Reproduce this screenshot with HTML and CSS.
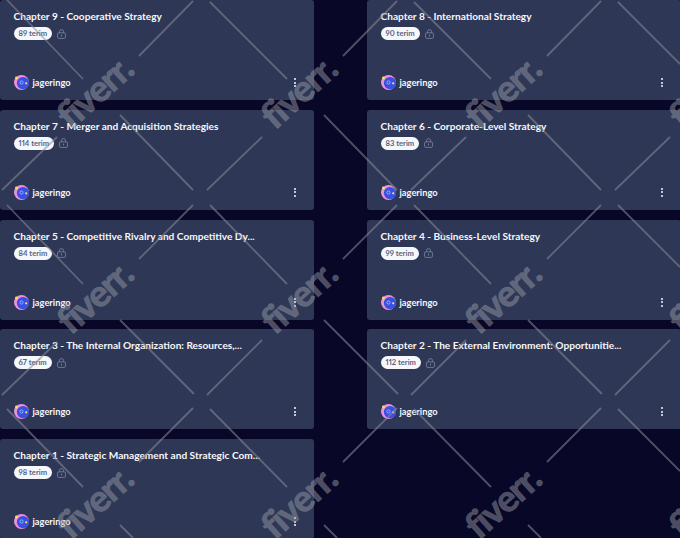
FILE: index.html
```html
<!DOCTYPE html>
<html lang="en">
<head>
  <meta charset="UTF-8" />
  <title>Chapters</title>
  <link rel="stylesheet" href="styles.css">
</head>
<body>
  <svg width="0" height="0" class="defs">
    <symbol id="lock" viewBox="0 0 10 11">
      <rect x="0.6" y="4.2" width="8.8" height="6.2" rx="1.4" fill="none" stroke="currentColor" stroke-width="0.9"/>
      <path d="M2.7 4.2V2.9a2.3 2.3 0 0 1 4.6 0v1.3" fill="none" stroke="currentColor" stroke-width="0.9"/>
      <rect x="4.5" y="6.2" width="1" height="2" fill="currentColor"/>
    </symbol>
    <symbol id="avatar" viewBox="0 0 16 16">
      <circle cx="8" cy="8" r="8" fill="#f08fe0"/>
      <circle cx="9.6" cy="8.6" r="6.6" fill="#3b4fe0"/>
      <circle cx="2.6" cy="3.2" r="1.5" fill="#f4e64a"/>
      <circle cx="8" cy="8" r="1.7" fill="none" stroke="#9fd0ff" stroke-width="0.8"/>
      <circle cx="13" cy="8.8" r="1.2" fill="#f4e64a"/>
    </symbol>
  </svg>

  <main class="grid">
    <article class="card">
      <h2>Chapter 9 - Cooperative Strategy</h2>
      <div class="meta"><span class="pill">89 terim</span><svg class="lock"><use href="#lock"/></svg></div>
      <div class="foot">
        <svg class="avatar"><use href="#avatar"/></svg><span class="user">jageringo</span>
        <span class="more"><i></i><i></i><i></i></span>
      </div>
    </article>
    <article class="card">
      <h2>Chapter 8 - International Strategy</h2>
      <div class="meta"><span class="pill">90 terim</span><svg class="lock"><use href="#lock"/></svg></div>
      <div class="foot">
        <svg class="avatar"><use href="#avatar"/></svg><span class="user">jageringo</span>
        <span class="more"><i></i><i></i><i></i></span>
      </div>
    </article>
    <article class="card">
      <h2>Chapter 7 - Merger and Acquisition Strategies</h2>
      <div class="meta"><span class="pill">114 terim</span><svg class="lock"><use href="#lock"/></svg></div>
      <div class="foot">
        <svg class="avatar"><use href="#avatar"/></svg><span class="user">jageringo</span>
        <span class="more"><i></i><i></i><i></i></span>
      </div>
    </article>
    <article class="card">
      <h2>Chapter 6 - Corporate-Level Strategy</h2>
      <div class="meta"><span class="pill">83 terim</span><svg class="lock"><use href="#lock"/></svg></div>
      <div class="foot">
        <svg class="avatar"><use href="#avatar"/></svg><span class="user">jageringo</span>
        <span class="more"><i></i><i></i><i></i></span>
      </div>
    </article>
    <article class="card">
      <h2>Chapter 5 - Competitive Rivalry and Competitive Dy...</h2>
      <div class="meta"><span class="pill">84 terim</span><svg class="lock"><use href="#lock"/></svg></div>
      <div class="foot">
        <svg class="avatar"><use href="#avatar"/></svg><span class="user">jageringo</span>
        <span class="more"><i></i><i></i><i></i></span>
      </div>
    </article>
    <article class="card">
      <h2>Chapter 4 - Business-Level Strategy</h2>
      <div class="meta"><span class="pill">99 terim</span><svg class="lock"><use href="#lock"/></svg></div>
      <div class="foot">
        <svg class="avatar"><use href="#avatar"/></svg><span class="user">jageringo</span>
        <span class="more"><i></i><i></i><i></i></span>
      </div>
    </article>
    <article class="card">
      <h2>Chapter 3 - The Internal Organization: Resources,...</h2>
      <div class="meta"><span class="pill">67 terim</span><svg class="lock"><use href="#lock"/></svg></div>
      <div class="foot">
        <svg class="avatar"><use href="#avatar"/></svg><span class="user">jageringo</span>
        <span class="more"><i></i><i></i><i></i></span>
      </div>
    </article>
    <article class="card">
      <h2>Chapter 2 - The External Environment: Opportunitie...</h2>
      <div class="meta"><span class="pill">112 terim</span><svg class="lock"><use href="#lock"/></svg></div>
      <div class="foot">
        <svg class="avatar"><use href="#avatar"/></svg><span class="user">jageringo</span>
        <span class="more"><i></i><i></i><i></i></span>
      </div>
    </article>
    <article class="card">
      <h2>Chapter 1 - Strategic Management and Strategic Com...</h2>
      <div class="meta"><span class="pill">98 terim</span><svg class="lock"><use href="#lock"/></svg></div>
      <div class="foot">
        <svg class="avatar"><use href="#avatar"/></svg><span class="user">jageringo</span>
        <span class="more"><i></i><i></i><i></i></span>
      </div>
    </article>
  </main>

  <!-- watermark tile repeats every 204 x 205 -->
  <svg class="mark" width="680" height="538">
    <g class="lines">
      <path d="M7 0L83 79M139 56L193 1M210 2L287 79M343 56L397 1M414 2L491 79M547 56L601 1M618 2L680 64"/>
      <path d="M120 115L193 190M324 115L397 190M528 115L601 190M2 190L57 137M207 190L262 137M411 190L466 137M615 190L670 137"/>
      <path d="M7 205L83 284M139 259L193 205M210 205L287 284M343 259L397 205M414 205L491 284M547 259L601 205M618 205L680 267"/>
      <path d="M120 320L194 394M324 320L398 394M528 320L602 394M2 395L57 342M207 395L262 340M411 395L466 340M615 395L670 340"/>
      <path d="M7 409L83 487M139 462L193 408M210 409L287 487M343 462L397 408M414 409L491 487M547 462L601 408M618 409L680 471"/>
      <path d="M120 525L133 538M324 525L337 538M528 525L541 538"/>
    </g>
    <g class="logos">
      <text transform="translate(71 131) rotate(-42)">fiverr.</text>
      <text transform="translate(275 131) rotate(-42)">fiverr.</text>
      <text transform="translate(479 131) rotate(-42)">fiverr.</text>
      <text transform="translate(683 131) rotate(-42)">fiverr.</text>
      <text transform="translate(71 336) rotate(-42)">fiverr.</text>
      <text transform="translate(275 336) rotate(-42)">fiverr.</text>
      <text transform="translate(479 336) rotate(-42)">fiverr.</text>
      <text transform="translate(683 336) rotate(-42)">fiverr.</text>
      <text transform="translate(71 541) rotate(-42)">fiverr.</text>
      <text transform="translate(275 541) rotate(-42)">fiverr.</text>
      <text transform="translate(479 541) rotate(-42)">fiverr.</text>
      <text transform="translate(683 541) rotate(-42)">fiverr.</text>
    </g>
  </svg>
</body>
</html>
```
FILE: styles.css
```css
* {
  margin: 0;
  padding: 0;
  box-sizing: border-box;
}

html, body {
  height: 538px;
  overflow: hidden;
}

body {
  background: #080727;
  font-family: "Lato", "Liberation Sans", sans-serif;
  position: relative;
}

.defs {
  position: absolute;
}

.grid {
  display: grid;
  grid-template-columns: 314px 314px;
  column-gap: 53px;
  row-gap: 9.8px;
}

.card {
  height: 100px;
  background: #2e3856;
  border-radius: 3px;
  padding: 10px 13px 10px 13.5px;
  display: flex;
  flex-direction: column;
}

.card h2 {
  font-size: 10.15px;
  font-weight: 700;
  line-height: 13px;
  color: #f6f7fb;
  white-space: nowrap;
}

.meta {
  display: flex;
  align-items: center;
  gap: 5px;
  margin-top: 4px;
}

.pill {
  height: 13px;
  padding: 0 5px;
  border-radius: 7px;
  background: #f6f7fb;
  color: #586380;
  font-size: 7.6px;
  font-weight: 700;
  line-height: 13px;
  font-variant-numeric: proportional-nums;
}

.lock {
  width: 9px;
  height: 10px;
  color: #7d869f;
}

.foot {
  margin-top: auto;
  display: flex;
  align-items: center;
  gap: 4px;
}

.avatar {
  width: 15px;
  height: 15px;
}

.user {
  font-size: 9.3px;
  font-weight: 700;
  color: #f6f7fb;
}

.more {
  margin-left: auto;
  margin-right: 5px;
  display: flex;
  flex-direction: column;
  gap: 1.5px;
}

.more i {
  display: block;
  width: 2px;
  height: 2px;
  border-radius: 50%;
  background: #f6f7fb;
}

.mark {
  position: absolute;
  left: 0;
  top: 0;
  pointer-events: none;
}

.lines path {
  fill: none;
  stroke: #8a8d99;
  stroke-width: 1.8;
  stroke-opacity: 0.55;
}

.logos text {
  font-family: "Lato", sans-serif;
  font-weight: 900;
  font-size: 37px;
  fill: #9a9ca6;
  fill-opacity: 0.48;
  stroke: #9a9ca6;
  stroke-opacity: 0.2;
  stroke-width: 1px;
  letter-spacing: -1.5px;
}
```
